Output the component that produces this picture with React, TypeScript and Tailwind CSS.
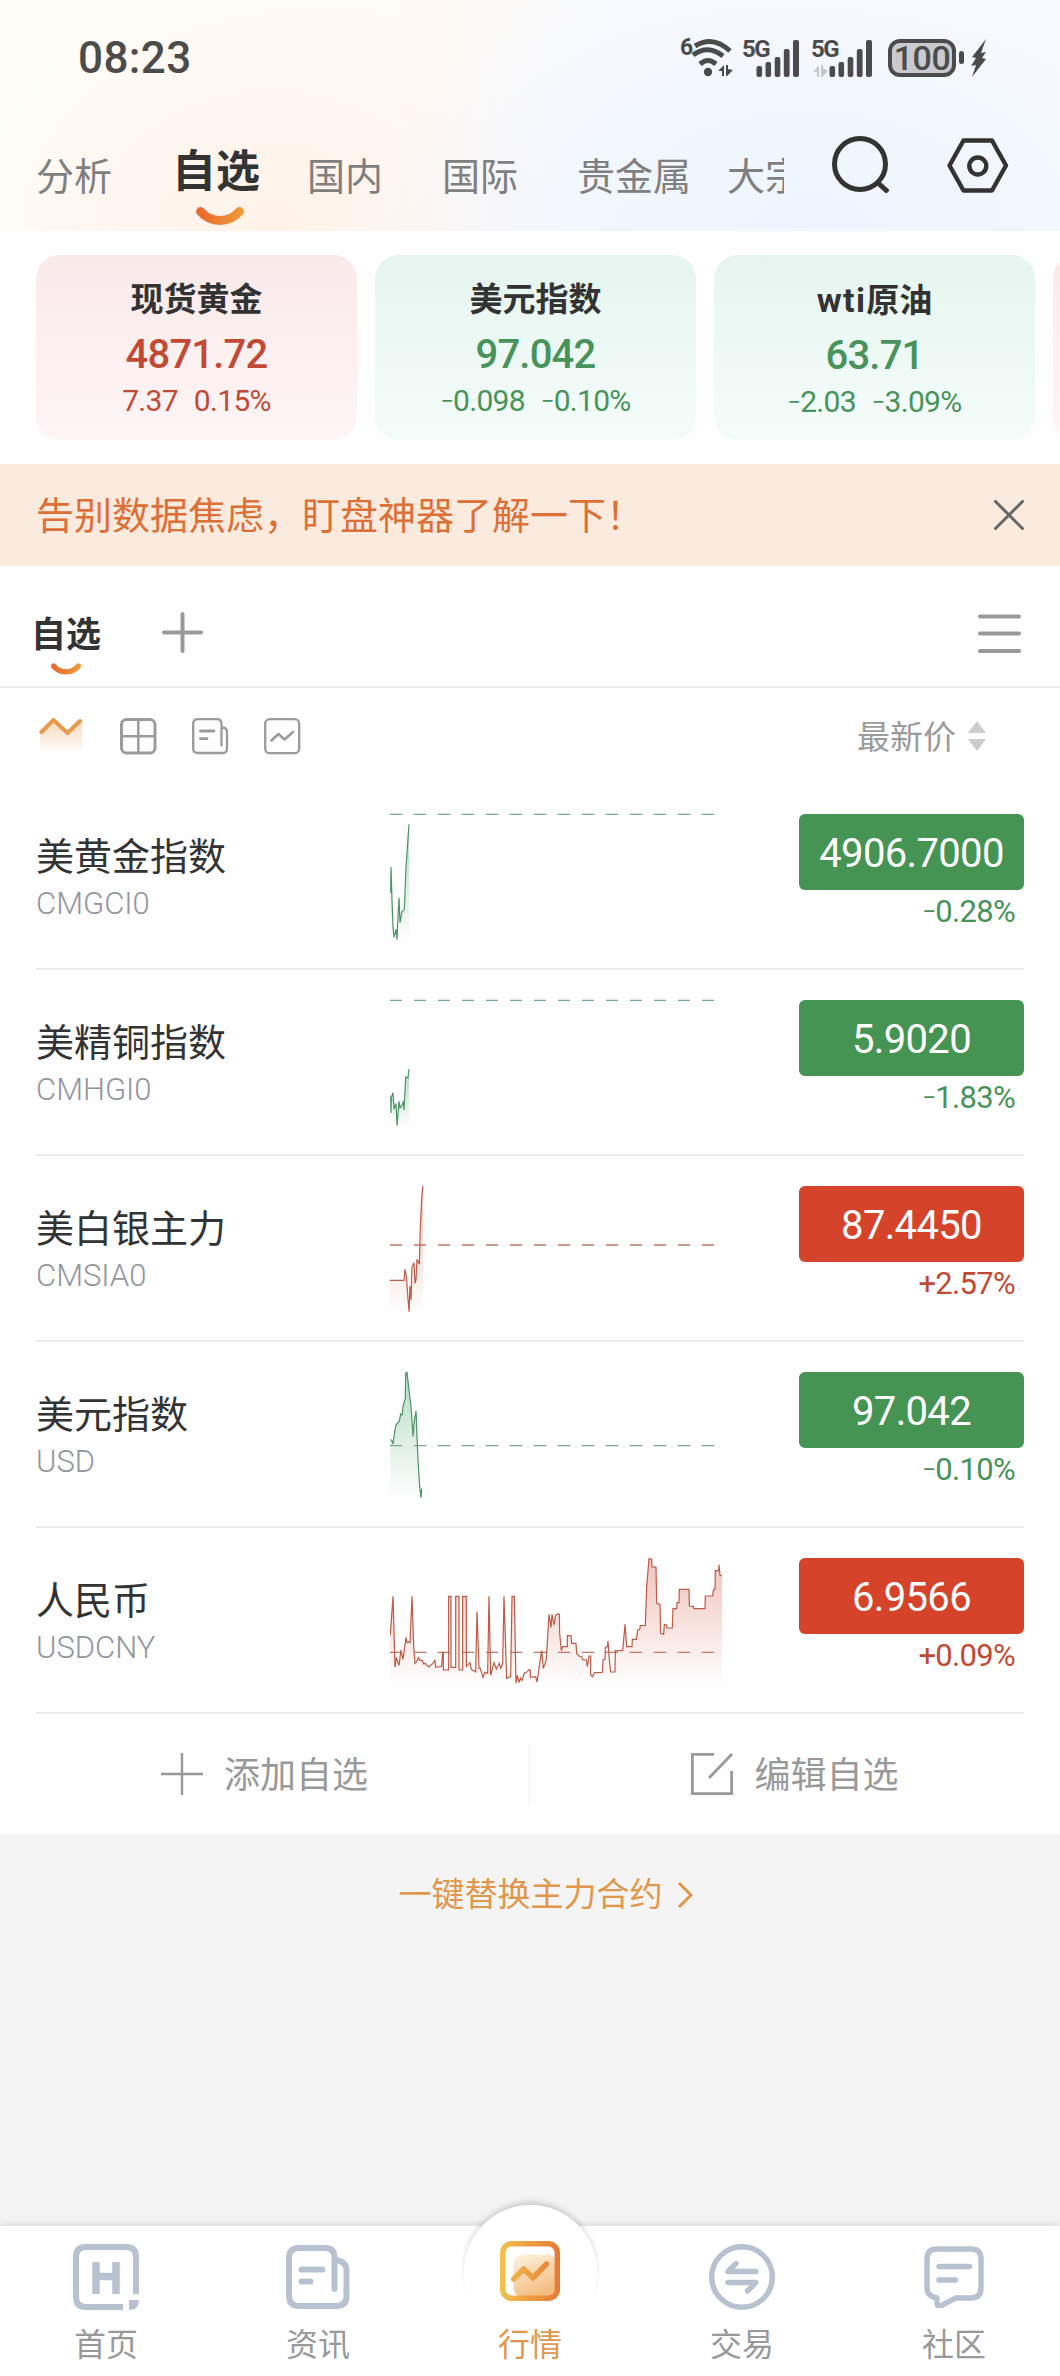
import React from "react";

const UP = "#c24a35";
const DOWN = "#47935a";

type Quote = {
  name: string;
  code: string;
  price: string;
  change: string;
  up: boolean;
  top: number;
  base: number;
  floor: number;
  peak: number;
  fill: number;
  points: string;
};

const cards = [
  { name: "现货黄金", price: "4871.72", diff: "7.37", pct: "0.15%", up: true },
  { name: "美元指数", price: "97.042", diff: "−0.098", pct: "−0.10%", up: false },
  { name: "wti原油", price: "63.71", diff: "−2.03", pct: "−3.09%", up: false },
];

// Chart coordinates are in thirds of a pixel; `top` is the row's upper edge.
const quotes: Quote[] = [
  {
    name: "美黄金指数", code: "CMGCI0", price: "4906.7000", change: "−0.28%", up: false,
    top: -18, base: 73, floor: 449, peak: 103, fill: 0.4,
    points: "62,308 63,231 66,330 69,410 72,442 78,418 81,449 83,400 87,323 90,398 96,365 103,358 108,230 117,103",
  },
  {
    name: "美精铜指数", code: "CMHGI0", price: "5.9020", change: "−1.83%", up: false,
    top: -30, base: 61, floor: 437, peak: 267, fill: 0.4,
    points: "62,350 63,398 64,352 69,338 72,388 78,370 81,437 84,400 87,364 90,384 97,374 100,364 102,390 107,291 114,293 117,267",
  },
  {
    name: "美白银主力", code: "CMSIA0", price: "87.4450", change: "+2.57%", up: true,
    top: 528, base: 795, floor: 995, peak: 618, fill: 0.4,
    points: "60,901 102,901 105,868 109,890 117,995 120,918 123,960 126,862 132,848 135,910 138,900 141,838 148,853 151,740 156,640 159,618",
  },
  {
    name: "美元指数", code: "USD", price: "97.042", change: "−0.10%", up: false,
    top: 6, base: 317, floor: 470, peak: 97, fill: 0.4,
    points: "61,300 65,300 69,312 75,270 78,255 88,243 92,222 96,225 100,195 106,175 107,100 111,97 117,150 123,200 126,240 129,289 133,240 138,213 141,290 144,360 149,440 153,473 155,446",
  },
  {
    name: "人民币", code: "USDCNY", price: "6.9566", change: "+0.09%", up: true,
    top: 564, base: 937, floor: 1032, peak: 656, fill: 0.4,
    points:
      "61,885 69,769 75,982 79,952 87,976 93,930 99,958 108,892 111,908 116,905 120,908 126,769 131,920 135,970 140,965 145,953 150,961 157,961 161,972 166,970 171,976 176,981 188,971 195,961 197,982 215,979 218,937 220,937 220,990 236,990 236,769 243,769 243,982 257,982 257,769 267,769 267,990 278,990 278,769 289,769 289,979 300,968 304,988 317,996 321,815 327,985 331,985 339,1012 345,997 353,1000 357,769 362,1006 372,968 379,987 388,970 392,985 398,970 402,769 410,1015 422,1010 426,769 433,769 438,1030 442,1006 447,1028 451,1014 456,1022 463,999 470,997 477,989 481,990 481,1012 497,1010 501,1026 507,985 515,932 520,985 529,958 533,890 537,823 543,862 546,823 552,855 557,826 565,821 568,823 569,880 574,932 578,920 592,920 592,887 603,887 605,910 618,910 620,940 627,948 636,951 638,959 649,960 652,980 657,948 662,948 662,1005 667,1010 674,998 697,997 699,960 705,957 706,922 712,920 714,903 718,960 722,996 735,996 736,932 758,932 765,853 770,920 786,920 787,898 799,898 803,870 809,868 811,857 826,856 830,740 837,656 845,658 846,680 858,682 860,790 870,793 872,880 881,883 883,853 890,855 891,864 907,864 909,806 920,806 921,788 927,788 928,748 957,748 958,798 970,799 972,806 1005,806 1006,768 1028,768 1030,750 1035,748 1036,692 1046,692 1047,674 1050,706 1056,708",
  },
];

// Signed figure with a short minus sign.
function Signed({ value }: { value: string }) {
  const negative = value.startsWith("−");
  return (
    <span className="tracking-[-0.7px]">
      {negative && <span className="relative -top-[0.07em] text-[0.78em]">−</span>}
      {negative ? value.slice(1) : value}
    </span>
  );
}

function Sparkline({ q }: { q: Quote }) {
  const pts = q.points.split(" ");
  const first = pts[0].split(",")[0];
  const last = pts[pts.length - 1].split(",")[0];
  const tone = q.up ? "#dd6a55" : "#4ba76a";
  return (
    <svg width="332" height="184" viewBox={`60 ${q.top} 996 552`} fill="none">
      <defs>
        <linearGradient id={`fill-${q.code}`} gradientUnits="userSpaceOnUse" x1="0" y1={q.peak} x2="0" y2={q.floor}>
          <stop offset="0" stopColor={tone} stopOpacity={q.fill} />
          <stop offset="1" stopColor={tone} stopOpacity="0" />
        </linearGradient>
      </defs>
      <polygon points={`${first},${q.floor} ${q.points} ${last},${q.floor}`} fill={`url(#fill-${q.code})`} />
      <line x1="60" x2="1034" y1={q.base} y2={q.base} stroke={q.up ? "#c47866" : "#7aaa8e"} strokeWidth="4" strokeDasharray="36 36" />
      <polyline points={q.points} stroke={q.up ? "#bd5b48" : "#4b9466"} strokeWidth="3.6" />
    </svg>
  );
}

function Smile({ className, id }: { className: string; id: string }) {
  return (
    <svg viewBox="0 0 48 18" className={className} fill="none">
      <defs>
        <linearGradient id={id} gradientUnits="userSpaceOnUse" x1="0" y1="0" x2="48" y2="0">
          <stop stopColor="#e9652f" />
          <stop offset="1" stopColor="#ef9d3a" />
        </linearGradient>
      </defs>
      <path d="M4.500 4.500C15 16.500 33 16.500 43.500 4.500" stroke={`url(#${id})`} strokeWidth="8.800" strokeLinecap="round" />
    </svg>
  );
}

function Signal({ arrows }: { arrows?: boolean }) {
  return (
    <div className="relative h-[38px] w-[56px]">
      <span className={`absolute -top-[3px] text-[24px] leading-[26px] font-bold tracking-[-1.5px] ${arrows ? "-left-[5px]" : "-left-px"}`}>5G</span>
      <svg width="56" height="38" viewBox="0 0 56 38" fill="currentColor" className="absolute left-0 top-0 overflow-visible">
        {arrows && <path d="M-3 33 3 26V38H1V33ZM5 26h2v3l5 3-6 6H5Z" fill="#c5c9cf" />}
        <rect x="13.500" y="27" width="5.600" height="11" rx="2" />
        <rect x="22.500" y="23" width="5.600" height="15" rx="2" />
        <rect x="31.700" y="18" width="5.600" height="20" rx="2" />
        <rect x="40.800" y="10" width="5.800" height="28" rx="2" />
        <rect x="50" y="1" width="6" height="37" rx="2" />
      </svg>
    </div>
  );
}

function StatusBar() {
  return (
    <div className="flex h-[115px] items-center pl-[78px] text-[#4b4b4b]">
      <span className="w-[602px] text-[44px] leading-[44px] font-medium tracking-[0.4px]">08:23</span>
      <div className="relative h-[40px] w-[53px]">
        <span className="absolute top-[-3px] left-0 text-[23px] leading-[26px] font-bold">6</span>
        <svg width="52" height="40" viewBox="0 0 52 40" fill="none" stroke="currentColor" className="absolute top-0 left-px">
          <path d="M14 8Q32 -3 49 13" strokeWidth="5" />
          <path d="M12 17Q27 6 42 18" strokeWidth="5" />
          <path d="M19 26Q27 19 35 26" strokeWidth="5" />
          <circle cx="27" cy="34" r="4.200" fill="currentColor" stroke="none" />
          <path d="M37 33 43 27V38H41V33ZM45 27h2v4l5 1-6 6h-1Z" fill="currentColor" stroke="none" />
        </svg>
      </div>
      <div className="ml-[10px] flex gap-[17px]">
        <Signal />
        <Signal arrows />
      </div>
      <div className="ml-[16px] flex h-[38px] w-[68px] items-center justify-center rounded-[12px] border-4 border-current bg-[#c8cace] text-[34px] leading-[34px] font-medium tracking-[-0.5px]">
        100
      </div>
      <div className="ml-[3px] h-[13px] w-[5px] rounded-full bg-current" />
      <svg width="15" height="38" viewBox="0 0 15 38" fill="currentColor" className="ml-[7px]">
        <path d="M15 0 1 18l4 1-5 8 5-1L1 38 15 20l-4-1 4-6-5 1Z" />
      </svg>
    </div>
  );
}

function Header() {
  return (
    <header className="h-[231px] bg-[radial-gradient(ellipse_470px_290px_at_810px_231px,#eef5fe_0%,#f2f6fe_45%,rgba(247,250,255,0)_100%),radial-gradient(ellipse_300px_240px_at_270px_231px,#fef3e9_0%,#fff6f0_55%,rgba(255,250,244,0)_100%),linear-gradient(90deg,#fffdf8_0%,#fffaf5_40%,#f8fafd_58%,#f8fbff_100%)]">
      <StatusBar />
      <div className="flex h-[116px] items-start text-[38px] leading-[40px] text-[#7f7f7f]">
        <nav className="flex h-[116px] w-[784px] items-start overflow-hidden pl-[36px] pt-[42px] whitespace-nowrap">
          <span className="w-[136px] shrink-0">分析</span>
          <div className="-mt-[7px] flex w-[135px] shrink-0 flex-col">
            <span className="text-[44px] leading-[44px] font-bold text-[#333]">自选</span>
            <Smile id="smile-main" className="mt-[13px] ml-[24px] h-[18px] w-[48px]" />
          </div>
          <span className="w-[135px] shrink-0">国内</span>
          <span className="w-[135px] shrink-0">国际</span>
          <span className="w-[136px] shrink-0">贵金属</span>
          <span className="ml-[14px] shrink-0">大宗</span>
        </nav>
        <svg width="58" height="58" viewBox="0 0 58 58" fill="none" stroke="#333" strokeWidth="5" className="mt-[20px] ml-[47px]">
          <circle cx="29" cy="29" r="25.500" />
          <path d="M46 47 57 57" />
        </svg>
        <svg width="62" height="58" viewBox="0 0 62 58" fill="none" stroke="#333" strokeLinejoin="round" className="mt-[22px] ml-[58px]">
          <path d="M16.500 3.500H45L59 28.500 45 53.500H16.500L2.500 28.500Z" strokeWidth="4.400" />
          <circle cx="30.800" cy="29" r="8.500" strokeWidth="4.400" />
        </svg>
      </div>
    </header>
  );
}

function IndexCards() {
  return (
    <section className="flex h-[233px] gap-[18px] overflow-hidden pt-[24px] pl-[36px]">
      {cards.map((c) => (
        <div
          key={c.name}
          style={{ color: c.up ? UP : DOWN }}
          className={`flex h-[185px] w-[321px] shrink-0 flex-col items-center rounded-[24px] bg-linear-to-b ${c.up ? "from-[#f9eaea] to-[#fff5f6]" : "from-[#e6f5f0] to-[#f4fcf9]"}`}
        >
          <span className="mt-[25px] text-[33px] leading-[40px] font-bold text-[#333]">
            {c.name.startsWith("wti") ? (
              <>
                <span className="text-[34px] tracking-[1.3px]">wti</span>
                {c.name.slice(3)}
              </>
            ) : (
              c.name
            )}
          </span>
          <span className="mt-[15px] text-[40px] leading-[40px] font-medium tracking-[-0.8px]">{c.price}</span>
          <span className="mt-[8px] flex gap-[16px] text-[30px] leading-[36px]">
            <Signed value={c.diff} />
            <Signed value={c.pct} />
          </span>
        </div>
      ))}
      <div className="h-[185px] w-[321px] shrink-0 rounded-[24px] bg-linear-to-b from-[#f9eaea] to-[#fff5f6]" />
    </section>
  );
}

function Banner() {
  return (
    <section className="flex h-[102px] items-center justify-between bg-[#fbeade] pr-[36px] pl-[36px]">
      <span className="mt-[2px] text-[38px] leading-[40px] text-[#dc7037]">告别数据焦虑，盯盘神器了解一下！</span>
      <svg width="30" height="30" viewBox="0 0 30 30" stroke="#686664" strokeWidth="3" strokeLinecap="round">
        <path d="M1.500 1.500 28.500 28.500M28.500 1.500 1.500 28.500" />
      </svg>
    </section>
  );
}

function GroupTabs() {
  return (
    <section className="flex h-[122px] items-start border-b-2 border-[#ededed] pl-[31px]">
      <div className="flex w-[131px] flex-col pt-[50px]">
        <span className="text-[35px] leading-[40px] font-bold text-[#333]">自选</span>
        <Smile id="smile-group" className="mt-[7px] ml-[20px] h-[12px] w-[30px]" />
      </div>
      <svg width="41" height="41" viewBox="0 0 41 41" stroke="#999" strokeWidth="4" strokeLinecap="round" className="mt-[46px]">
        <path d="M20.500 2V39M2 20.500H39" />
      </svg>
      <svg width="43" height="40" viewBox="0 0 43 40" stroke="#999" strokeWidth="4" strokeLinecap="round" className="mt-[48px] mr-[39px] ml-auto">
        <path d="M2 2.500H41M2 19.500H41M2 37H41" />
      </svg>
    </section>
  );
}

function ViewBar() {
  return (
    <section className="flex h-[96px] items-start pt-[30px] pl-[39px] text-[#9b9b9b]">
      <svg width="44" height="38" viewBox="0 0 44 38" fill="none" className="-mt-px">
        <defs>
          <linearGradient id="trend-fade" x1="0" y1="0" x2="0" y2="1">
            <stop stopColor="#f6c79c" stopOpacity=".7" />
            <stop offset="1" stopColor="#f6c79c" stopOpacity="0" />
          </linearGradient>
        </defs>
        <path d="M1 16 15 3 29 17 43 4V36H1Z" fill="url(#trend-fade)" />
        <path d="M2.500 15 14.500 3 28.500 16 41 4" stroke="#e59a4c" strokeWidth="4" strokeLinejoin="round" strokeLinecap="round" />
      </svg>
      <svg width="37" height="37" viewBox="0 0 37 37" fill="none" stroke="currentColor" strokeWidth="3" className="ml-[37px]">
        <rect x="1.500" y="1.500" width="33.500" height="33.500" rx="5" />
        <path d="M18.300 1.500V35M1.500 18.300H35" strokeWidth="2.500" />
      </svg>
      <svg width="37" height="37" viewBox="0 0 37 37" fill="none" stroke="currentColor" strokeWidth="2.300" strokeLinecap="round" className="ml-[35px]">
        <path d="M29.500 27.500V6Q29.500 1.200 25 1.200H6Q1.200 1.200 1.200 6V30.500Q1.200 35 6 35H31Q35 35 35 30.500V14Q35 9.500 30 9.500" />
        <path d="M8.500 13H22M8.500 20.700H15" strokeWidth="2.800" />
      </svg>
      <svg width="37" height="37" viewBox="0 0 37 37" fill="none" stroke="currentColor" strokeWidth="2.300" strokeLinecap="round" strokeLinejoin="round" className="ml-[35px]">
        <rect x="1.200" y="1.200" width="34" height="34" rx="4.500" />
        <path d="M7.500 22.500 14.500 16 20.500 21.500 29 14" strokeWidth="2.600" />
      </svg>
      <div className="mr-[74px] ml-auto flex items-start">
        <span className="mt-px text-[33px] leading-[38px]">最新价</span>
        <svg width="18" height="30" viewBox="0 0 18 30" fill="#ccc" className="mt-[3px] ml-[12px]">
          <path d="M9 0 18 12H0ZM0 18H18L9 30Z" />
        </svg>
      </div>
    </section>
  );
}

function QuoteRow({ q }: { q: Quote }) {
  return (
    <li className="flex h-[186px] items-start border-b-2 border-[#ededed]">
      <div className="flex w-[354px] flex-col pt-[53px]">
        <span className="text-[38px] leading-[40px] text-[#333]">{q.name}</span>
        <span className="mt-[8px] text-[31px] leading-[38px] font-light text-[#92969e]">{q.code}</span>
      </div>
      <Sparkline q={q} />
      <div className="ml-auto flex w-[225px] flex-col items-end pt-[30px]">
        <span className={`flex h-[76px] w-[225px] items-center justify-center rounded-[6px] pt-[4px] text-[40px] leading-[40px] tracking-[-0.65px] text-white ${q.up ? "bg-[#d4432a]" : "bg-[#459453]"}`}>
          {q.price}
        </span>
        <span className="mt-[4px] mr-[9px] text-[31px] leading-[36px]" style={{ color: q.up ? UP : DOWN }}>
          <Signed value={q.change} />
        </span>
      </div>
    </li>
  );
}

function Actions() {
  return (
    <section className="flex h-[120px] items-center text-[36px] leading-[40px] text-[#999]">
      <div className="flex h-[60px] w-[530px] items-center justify-center border-r border-[#f0f0f0]">
        <svg width="42" height="42" viewBox="0 0 42 42" stroke="currentColor" strokeWidth="2.400">
          <path d="M21 0V42M0 21H42" />
        </svg>
        <span className="mt-[3px] ml-[21px]">添加自选</span>
      </div>
      <div className="flex w-[530px] items-center justify-center">
        <svg width="42" height="42" viewBox="0 0 42 42" fill="none" stroke="currentColor" strokeWidth="2.800">
          <path d="M23 1.400H1.400V40.600H40.600V18M41 1 18 25" />
        </svg>
        <span className="mt-[3px] ml-[21px]">编辑自选</span>
      </div>
    </section>
  );
}

const slate = "#b7c1d0";

const HomeIcon = (
  <svg width="66" height="66" viewBox="0 0 66 66" fill="none" stroke={slate} strokeWidth="6">
    <path d="M63 50V13Q63 3 53 3H13Q3 3 3 13V53Q3 63 13 63H50" />
    <path d="M56 56H66Q66 66 56 66Z" fill={slate} stroke="none" />
    <path d="M23 18V50M43 18V50M23 32.500H43" strokeWidth="7.500" />
  </svg>
);

const NewsIcon = (
  <svg width="64" height="64" viewBox="0 0 64 64" fill="none" stroke={slate} strokeWidth="6" strokeLinecap="round">
    <path d="M48.500 44V13Q48.500 3 39 3H13Q3 3 3 13V50Q3 61 13 61H50Q60.500 61 60.500 51V26Q60.500 16 50 15.500" />
    <path d="M15.500 24.500H36.500M15.500 36.500H24.500" />
  </svg>
);

const MarketIcon = (
  <svg width="60" height="60" viewBox="0 0 62 60" preserveAspectRatio="none" fill="none">
    <defs>
      <linearGradient id="market-line" gradientUnits="userSpaceOnUse" x1="0" y1="0" x2="62" y2="0">
        <stop stopColor="#f2c24c" />
        <stop offset=".5" stopColor="#ec9d40" />
        <stop offset="1" stopColor="#e67a36" />
      </linearGradient>
      <linearGradient id="market-fill" x1="0" y1="0" x2=".4" y2="1">
        <stop stopColor="#fff4e2" />
        <stop offset="1" stopColor="#f3bd80" />
      </linearGradient>
    </defs>
    <rect x="14" y="13.500" width="45" height="43" rx="10" fill="url(#market-fill)" />
    <rect x="2.800" y="2.800" width="56.400" height="54.400" rx="9" stroke="url(#market-line)" strokeWidth="5.600" />
    <path d="M14 38 24.500 28 34 37 48 23" stroke="url(#market-line)" strokeWidth="5.500" strokeLinecap="round" strokeLinejoin="round" />
  </svg>
);

const TradeIcon = (
  <svg width="66" height="66" viewBox="0 0 66 66" fill="none" stroke={slate} strokeWidth="5.400" strokeLinecap="round" strokeLinejoin="round">
    <circle cx="33" cy="33" r="30.300" />
    <path d="M47 27.500H19L27 19.500M19 38.500H47L38.500 47" />
  </svg>
);

const CommunityIcon = (
  <svg width="60" height="62" viewBox="0 0 60 62" fill="none" stroke={slate} strokeWidth="5.400" strokeLinecap="round" strokeLinejoin="round">
    <path d="M13 3H47Q57 3 57 13V42Q57 52 47 52H32Q24 56 16.500 60 13 61 13 57V52Q3 50 3 42V13Q3 3 13 3Z" />
    <path d="M15 20.500H45.500M15 34H31.500" />
  </svg>
);

const tabs = [
  { label: "首页", icon: HomeIcon, pad: "pt-[18px]" },
  { label: "资讯", icon: NewsIcon, pad: "pt-[19px]" },
  { label: "行情", icon: MarketIcon, pad: "pt-[15px]" },
  { label: "交易", icon: TradeIcon, pad: "pt-[18px]" },
  { label: "社区", icon: CommunityIcon, pad: "pt-[20px]" },
];

function TabBar() {
  return (
    <nav className="relative grid h-[150px] grid-cols-5 bg-white shadow-[0_-2px_7px_rgba(0,0,0,0.10)]">
      <div className="absolute -top-[21px] left-[464px] h-[133px] w-[133px] rounded-full bg-white shadow-[0_-5px_6px_-2px_rgba(0,0,0,0.18)]" />
      {tabs.map((t) => (
        <div key={t.label} className="relative flex flex-col items-center">
          <div className={`h-[99px] ${t.pad}`}>{t.icon}</div>
          <span className={`text-[32px] leading-[40px] ${t.label === "行情" ? "text-[#e0974c]" : "text-[#999]"}`}>{t.label}</span>
        </div>
      ))}
    </nav>
  );
}

export default function App() {
  return (
    <div className="flex h-[2376px] w-[1060px] flex-col overflow-hidden bg-[#f4f4f4] font-[Roboto,'Noto_Sans_CJK_SC',sans-serif]">
      <div className="bg-[#fefefe]">
        <Header />
        <IndexCards />
        <Banner />
        <GroupTabs />
        <ViewBar />
        <ul className="px-[36px]">
          {quotes.map((q) => (
            <QuoteRow key={q.code} q={q} />
          ))}
        </ul>
        <Actions />
      </div>
      <div className="flex flex-1 items-start justify-center pt-[41px] text-[33px] leading-[40px] text-[#e0974c]">
        <span className="ml-[31px]">一键替换主力合约</span>
        <svg width="16" height="26" viewBox="0 0 16 26" fill="none" stroke="currentColor" strokeWidth="3" className="mt-[7px] ml-[14px]">
          <path d="M2 1 14 13 2 25" />
        </svg>
      </div>
      <TabBar />
    </div>
  );
}
